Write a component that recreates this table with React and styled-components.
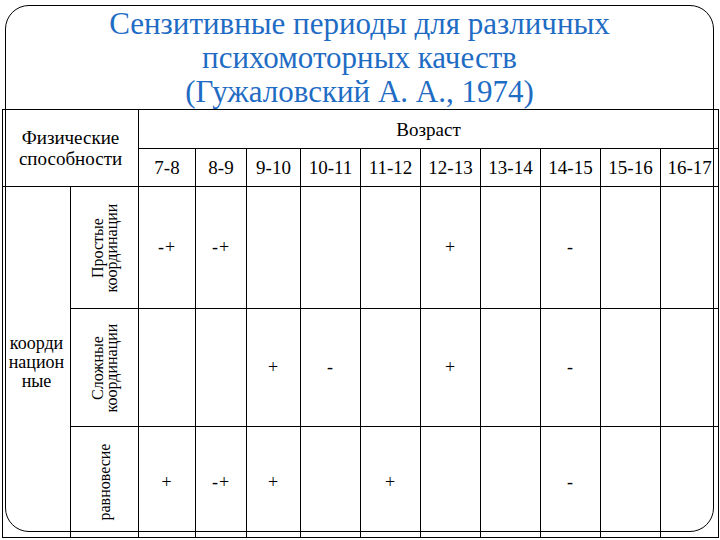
import styled, { createGlobalStyle } from "styled-components";

const GlobalStyle = createGlobalStyle`
  html, body {
    margin: 0;
    background: #fff;
  }
  html, body, #root, #root * {
    font-family: "Liberation Serif", "Times New Roman", Tinos, serif !important;
  }
`;

const ages = ["7-8", "8-9", "9-10", "10-11", "11-12", "12-13", "13-14", "14-15", "15-16", "16-17"];
const ageWidths = [57, 51, 54, 60, 60, 60, 60, 60, 60, 58];

const rows = [
  {
    label: ["Простые", "координации"],
    height: 122,
    marks: ["-+", "-+", "", "", "", "+", "", "-", "", ""],
  },
  {
    label: ["Сложные", "координации"],
    height: 118,
    marks: ["", "", "+", "-", "", "+", "", "-", "", ""],
  },
  {
    label: ["равновесие"],
    height: 111,
    marks: ["+", "-+", "+", "", "+", "", "", "-", "", ""],
  },
];

const App = () => {
  return (
    <>
      <GlobalStyle />
      <Page>
        <Frame>
          <Title>
            Сензитивные периоды для различных
            <br />
            психомоторных качеств
            <br />
            (Гужаловский А. А., 1974)
          </Title>

          <Table>
            <colgroup>
              <Col $w={68} />
              <Col $w={68} />
              {ageWidths.map((w, i) => (
                <Col key={i} $w={w} />
              ))}
            </colgroup>
            <tbody>
              <Row $h={39}>
                <HeadCell colSpan={2} rowSpan={2}>
                  Физические
                  <br />
                  способности
                </HeadCell>
                <HeadCell colSpan={10}>Возраст</HeadCell>
              </Row>
              <Row $h={38}>
                {ages.map((a) => (
                  <AgeCell key={a}>{a}</AgeCell>
                ))}
              </Row>
              {rows.map((r, i) => (
                <Row key={i} $h={r.height}>
                  {i === 0 && (
                    <GroupCell rowSpan={3}>
                      коорди
                      <br />
                      национ
                      <br />
                      ные
                    </GroupCell>
                  )}
                  <LabelCell>
                    <Rotator>
                      <RotatedText>
                        {r.label.map((l, j) => (
                          <div key={j}>{l}</div>
                        ))}
                      </RotatedText>
                    </Rotator>
                  </LabelCell>
                  {r.marks.map((m, j) => (
                    <MarkCell key={j}>{m}</MarkCell>
                  ))}
                </Row>
              ))}
            </tbody>
          </Table>
        </Frame>
      </Page>
    </>
  );
};

export default App;

const Page = styled.div`
  width: 720px;
  height: 540px;
  padding: 5px 6px 0 5px;
  box-sizing: border-box;
  overflow: hidden;
  font-family: "Liberation Serif", serif;
  color: #000;
`;

const Frame = styled.div`
  width: 709px;
  height: 527px;
  box-sizing: border-box;
  border: 1px solid #000;
  border-radius: 24px;
  display: flex;
  flex-direction: column;
`;

const Title = styled.div`
  height: 105px;
  padding-top: 1px;
  box-sizing: border-box;
  text-align: center;
  font-family: "Liberation Serif", serif;
  font-size: 31px;
  line-height: 34px;
  color: #1f6cc4;
`;

const Table = styled.table`
  margin-left: -4px;
  width: 716px;
  flex-shrink: 0;
  border-collapse: collapse;
  table-layout: fixed;

  td {
    border: 1px solid #000;
    padding: 0;
    text-align: center;
    vertical-align: middle;
  }
`;

const Col = styled.col`
  width: ${(p) => p.$w}px;
`;

const Row = styled.tr`
  height: ${(p) => p.$h}px;
`;

const HeadCell = styled.td`
  font-size: 19px;
  line-height: 21px;
`;

const AgeCell = styled.td`
  font-size: 19px;
  white-space: nowrap;
`;

const GroupCell = styled.td`
  font-size: 18px;
  line-height: 19px;
`;

const LabelCell = styled.td``;

const Rotator = styled.div`
  width: 68px;
  display: flex;
  justify-content: center;
  align-items: center;
`;

const RotatedText = styled.div`
  flex-shrink: 0;
  transform: rotate(-90deg);
  font-size: 16px;
  line-height: 14px;
  white-space: nowrap;
  text-align: center;
`;

const MarkCell = styled.td`
  font-size: 18px;
  letter-spacing: 1px;
`;
